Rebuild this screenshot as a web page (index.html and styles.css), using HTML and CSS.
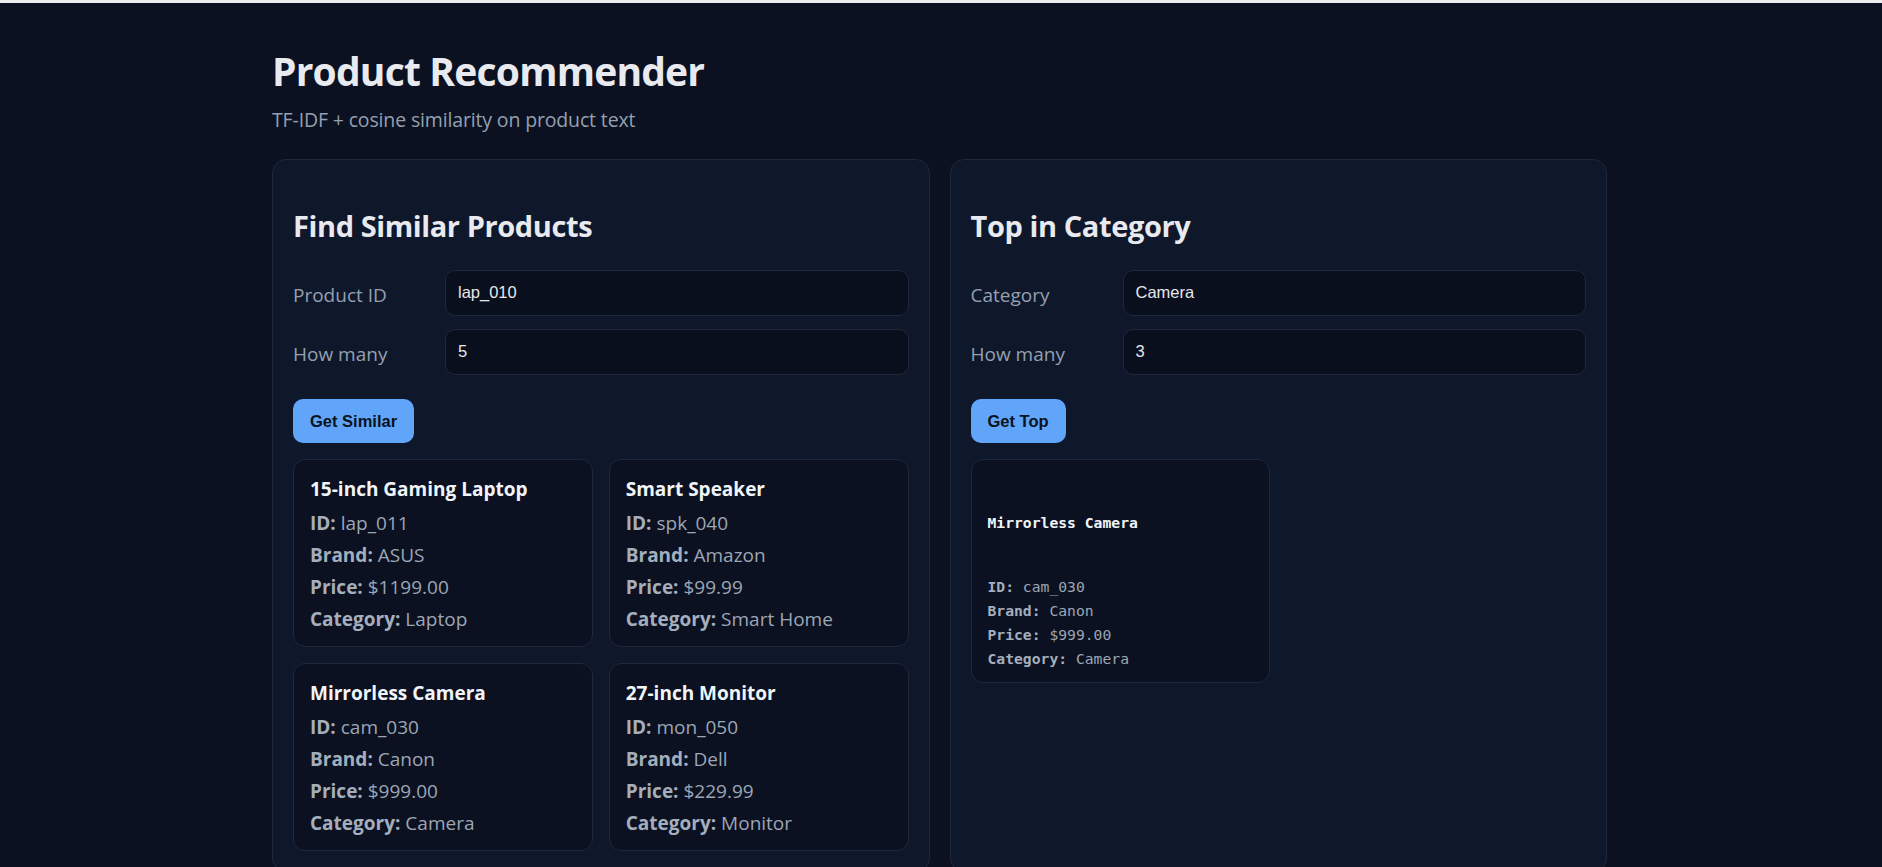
FILE: index.html
```html
<!DOCTYPE html>
<html lang="en">
<head>
<meta charset="utf-8">
<title>Product Recommender</title>
<link rel="stylesheet" href="styles.css">
</head>
<body>
<div class="page">
  <div class="container">
    <h1 class="title">Product Recommender</h1>
    <p class="subtitle">TF-IDF + cosine similarity on product text</p>

    <div class="panels">
      <section class="panel">
        <h2 class="panel-title">Find Similar Products</h2>
        <div class="form">
          <label class="label">Product ID</label>
          <input class="input" type="text" value="lap_010">
          <label class="label">How many</label>
          <input class="input" type="text" value="5">
        </div>
        <button class="btn">Get Similar</button>
        <div class="results">
          <div class="rcard">
            <div class="rtitle">15-inch Gaming Laptop</div>
            <div class="rline"><b>ID:</b> lap_011</div>
            <div class="rline"><b>Brand:</b> ASUS</div>
            <div class="rline"><b>Price:</b> $1199.00</div>
            <div class="rline"><b>Category:</b> Laptop</div>
          </div>
          <div class="rcard">
            <div class="rtitle">Smart Speaker</div>
            <div class="rline"><b>ID:</b> spk_040</div>
            <div class="rline"><b>Brand:</b> Amazon</div>
            <div class="rline"><b>Price:</b> $99.99</div>
            <div class="rline"><b>Category:</b> Smart Home</div>
          </div>
          <div class="rcard">
            <div class="rtitle">Mirrorless Camera</div>
            <div class="rline"><b>ID:</b> cam_030</div>
            <div class="rline"><b>Brand:</b> Canon</div>
            <div class="rline"><b>Price:</b> $999.00</div>
            <div class="rline"><b>Category:</b> Camera</div>
          </div>
          <div class="rcard">
            <div class="rtitle">27-inch Monitor</div>
            <div class="rline"><b>ID:</b> mon_050</div>
            <div class="rline"><b>Brand:</b> Dell</div>
            <div class="rline"><b>Price:</b> $229.99</div>
            <div class="rline"><b>Category:</b> Monitor</div>
          </div>
        </div>
      </section>

      <section class="panel">
        <h2 class="panel-title">Top in Category</h2>
        <div class="form">
          <label class="label">Category</label>
          <input class="input" type="text" value="Camera">
          <label class="label">How many</label>
          <input class="input" type="text" value="3">
        </div>
        <button class="btn">Get Top</button>
        <div class="results">
          <div class="rcard mono">
            <div class="mtitle">Mirrorless Camera</div>
            <div class="mline"><b>ID:</b> cam_030</div>
            <div class="mline"><b>Brand:</b> Canon</div>
            <div class="mline"><b>Price:</b> $999.00</div>
            <div class="mline"><b>Category:</b> Camera</div>
          </div>
        </div>
      </section>
    </div>
  </div>
</div>
</body>
</html>
```

FILE: styles.css
```css
* { box-sizing: border-box; }

html, body {
  margin: 0;
  padding: 0;
  background: #0b1120;
}

body {
  font-family: "Open Sans", "Noto Sans", sans-serif;
  color: #e5e7eb;
}

.page {
  border-top: 3px solid #ececec;
  padding-right: 3px;
  min-height: 100vh;
}

.container {
  width: 1335px;
  margin: 0 auto;
  padding-top: 44px;
}

.title {
  margin: 0;
  font-size: 39px;
  line-height: 48px;
  letter-spacing: -0.8px;
  font-weight: 700;
  color: #e8eaf0;
}

.subtitle {
  margin: 11px 0 0;
  font-size: 19.5px;
  line-height: 28px;
  letter-spacing: -0.15px;
  color: #94a0b2;
}

.panels {
  margin-top: 25px;
  display: grid;
  grid-template-columns: 1fr 1fr;
  gap: 20px;
}

.panel {
  background: #0f172a;
  border: 1px solid #1e293b;
  border-radius: 14px;
  padding: 20px 20px 20px;
}

.panel-title {
  margin: 28px 0 26px;
  font-size: 29px;
  line-height: 36px;
  letter-spacing: -0.4px;
  font-weight: 700;
  color: #e8eaf0;
}

.form {
  display: grid;
  grid-template-columns: 140px 1fr;
  column-gap: 12px;
  row-gap: 13px;
  align-items: center;
}

.label {
  font-size: 19px;
  line-height: 28px;
  padding-top: 3px;
  color: #94a0b2;
}

.input {
  height: 46px;
  width: 100%;
  background: #0a0f1e;
  border: 1px solid #1e293b;
  border-radius: 10px;
  padding: 0 12px 2px;
  color: #e5e7eb;
  font-family: "Liberation Sans", Arial, sans-serif;
  font-size: 16.5px;
  outline: none;
}

.btn {
  margin-top: 24px;
  height: 44px;
  padding: 0 17px;
  border: none;
  border-radius: 10px;
  background: #60a5fa;
  color: #0b1220;
  font-family: "Liberation Sans", Arial, sans-serif;
  font-weight: 700;
  font-size: 16.5px;
}

.results {
  margin-top: 16px;
  display: grid;
  grid-template-columns: 1fr 1fr;
  gap: 16px 16px;
  align-items: start;
}

.rcard {
  background: #0b1120;
  border: 1px solid #1e293b;
  border-radius: 12px;
  padding: 16px 16px 14px;
  display: flex;
  flex-direction: column;
  gap: 6px;
}

.rtitle {
  font-size: 19px;
  line-height: 26px;
  font-weight: 700;
  color: #f1f5f9;
  margin-bottom: 2px;
}

.rline {
  font-size: 19px;
  line-height: 26px;
  color: #9ca6b6;
}

.rline b {
  color: #a4aebd;
  font-weight: 700;
}

.rcard.mono {
  gap: 0;
  padding: 16px 16px 11px 16px;
  font-family: "DejaVu Sans Mono", "Liberation Mono", monospace;
}

.mtitle {
  margin: 35px 0 40px;
  font-size: 14.7px;
  line-height: 24px;
  font-weight: 700;
  color: #f1f5f9;
}

.mline {
  font-size: 14.7px;
  line-height: 24px;
  color: #9ca6b6;
}

.mline b {
  color: #a4aebd;
}
```
